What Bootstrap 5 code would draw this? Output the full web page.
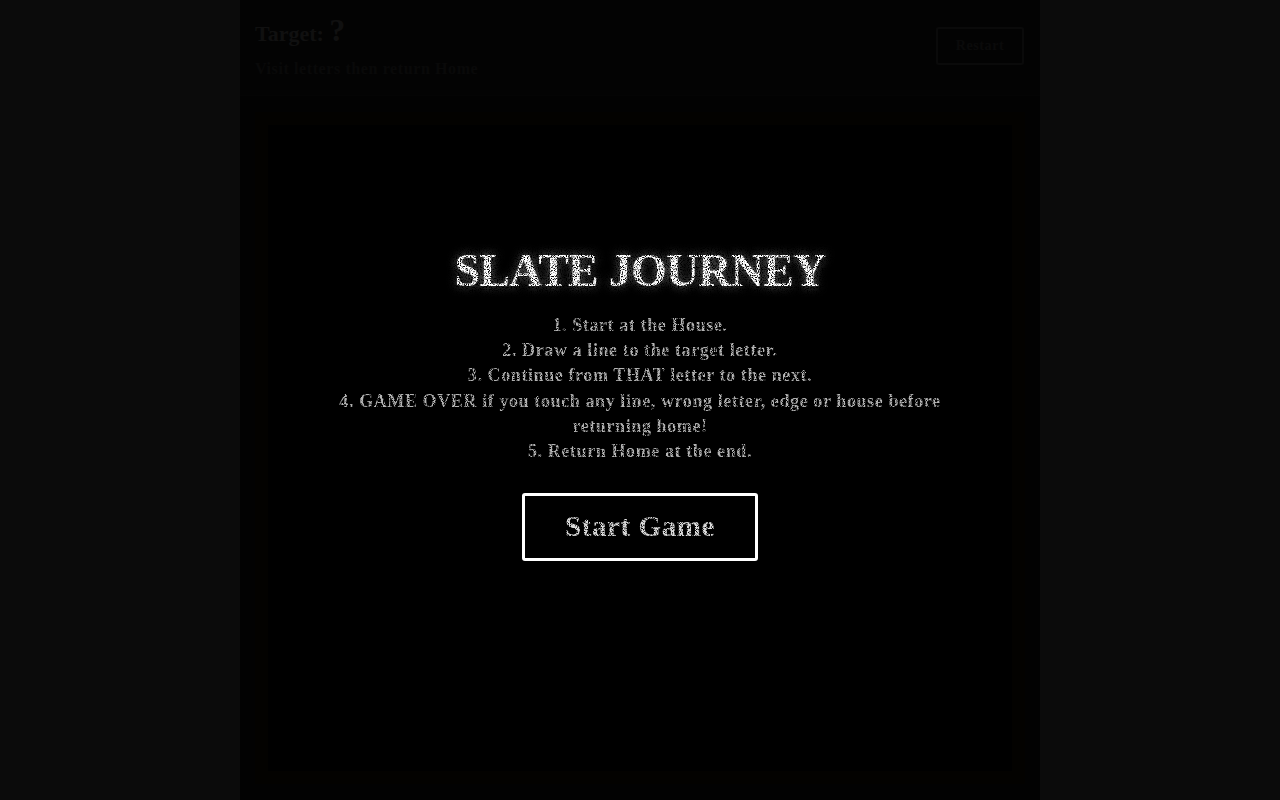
<!DOCTYPE html>
<html lang="en"><head><meta charset="utf-8"><title>Slate Journey</title>
<link href="https://cdn.jsdelivr.net/npm/bootstrap@5.3.0/dist/css/bootstrap.min.css" rel="stylesheet">
<style>
html,body{height:100%;overflow:hidden}
body{background:#0b0b0b;font-family:"Liberation Serif",serif;color:#fff}
.slate-app{width:800px;height:800px;background:#050505;position:relative}
.slate-head{height:96px;padding:13px 15px 15px;border-bottom:1px solid #0a0a0a;background:#090909}
.slate-target{font-size:22px;font-weight:700;color:#282828;line-height:34px}
.slate-target b{font-size:32px;margin-left:0}
.slate-sub{font-size:16px;color:#171717;margin-top:8px;line-height:20px;letter-spacing:.6px;font-weight:700}
.slate-reset{border:2px solid #1a1a1a;background:transparent;color:#1a1a1a;border-radius:3px;font-size:14px;line-height:16px;font-weight:700;padding:0;width:88px;height:38px;margin-top:14px;margin-right:1px;letter-spacing:.6px}
.slate-board{padding:16px 15px;height:704px}
.slate-inner{height:100%;border:13px solid #080602;background:#000}
.slate-veil{position:absolute;inset:0;background:rgba(0,0,0,.6);padding-top:4px}
.slate-title{font-size:46px;font-weight:700;line-height:1.2;color:#fff;margin:0 0 15px;text-shadow:0 0 10px rgba(255,255,255,.5);letter-spacing:-.8px}
.slate-rules{width:640px;font-size:18px;font-weight:700;line-height:25.2px;color:#b5b5b5;margin-bottom:29px;letter-spacing:.6px}
.slate-start{width:236px;height:68px;background:#000;border:3px solid #fff;border-radius:3px;color:#ddd;font-size:29px;font-weight:700;padding:0;letter-spacing:.6px}
.chalky{filter:url(#chalk)}
</style></head>
<body>
<svg width="0" height="0" class="position-absolute"><filter id="chalk"><feTurbulence type="fractalNoise" baseFrequency=".9" numOctaves="2" seed="4" result="n"/><feColorMatrix in="n" type="matrix" values="0 0 0 0 1 0 0 0 0 1 0 0 0 0 1 0 0 0 -5 3.4" result="m"/><feComposite in="SourceGraphic" in2="m" operator="in"/></filter></svg>
<div class="d-flex justify-content-center">
<div class="slate-app">
<div class="slate-head d-flex justify-content-between align-items-start">
<div><div class="slate-target">Target: <b>?</b></div><div class="slate-sub">Visit letters then return Home</div></div>
<button class="slate-reset" type="button">Restart</button>
</div>
<div class="slate-board"><div class="slate-inner"></div></div>
<div class="slate-veil d-flex flex-column align-items-center justify-content-center text-center">
<h1 class="slate-title chalky">SLATE JOURNEY</h1>
<div class="slate-rules chalky">1. Start at the House.<br>2. Draw a line to the target letter.<br>3. Continue from THAT letter to the next.<br>4. GAME OVER if you touch any line, wrong letter, edge or house before returning home!<br>5. Return Home at the end.</div>
<button class="slate-start" type="button"><span class="chalky d-inline-block">Start Game</span></button>
</div>
</div></div>
<script src="https://cdn.jsdelivr.net/npm/bootstrap@5.3.0/dist/js/bootstrap.bundle.min.js"></script>
</body></html>
